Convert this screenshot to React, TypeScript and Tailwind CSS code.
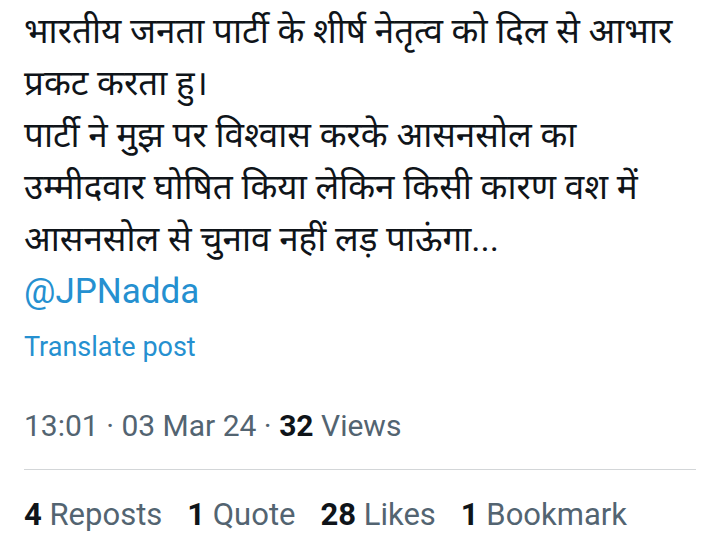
import React from 'react'

const lines = [
  'भारतीय जनता पार्टी के शीर्ष नेतृत्व को दिल से आभार',
  'प्रकट करता हु।',
  'पार्टी ने मुझ पर विश्वास करके आसनसोल का',
  'उम्मीदवार घोषित किया लेकिन किसी कारण वश में',
  'आसनसोल से चुनाव नहीं लड़ पाऊंगा...',
]

const stats = [
  { n: '4', label: 'Reposts' },
  { n: '1', label: 'Quote' },
  { n: '28', label: 'Likes' },
  { n: '1', label: 'Bookmark' },
]

export default function App() {
  return (
    <div className="h-[545px] w-[720px] bg-white px-6 pt-[6px] font-['Roboto','Noto_Sans',sans-serif] text-[#0f1419]">
      <div className="text-[35px] leading-[52px] whitespace-nowrap">
        {lines.map((l, i) => (
          <div key={i}>{l}</div>
        ))}
        <div className="text-[#2590d0]">@JPNadda</div>
      </div>

      <div className="mt-[13px] text-[27px] leading-[32px] text-[#2590d0]">Translate post</div>

      <div className="mt-[45px] text-[30px] leading-[36px] text-[#536471]">
        13:01 · 03 Mar 24 · <span className="font-bold text-[#0f1419]">32</span> Views
      </div>

      <div className="mt-[25px] h-px bg-[#d3d6d8]" />

      <div className="mt-[27px] flex gap-[25px] text-[31px] leading-[36px] text-[#536471]">
        {stats.map((s) => (
          <span key={s.label}>
            <span className="font-bold text-[#0f1419]">{s.n}</span> {s.label}
          </span>
        ))}
      </div>
    </div>
  )
}
